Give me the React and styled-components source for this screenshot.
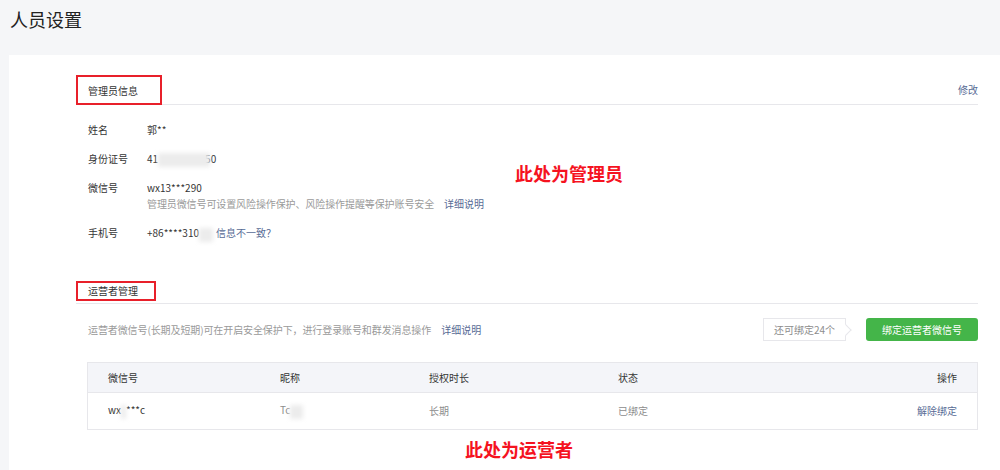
import React from 'react';
import styled, { createGlobalStyle } from 'styled-components';

const GlobalStyle = createGlobalStyle`
  html, body {
    margin: 0;
    padding: 0;
    background: #f5f6f8;
    overflow: hidden;
  }
  body {
    font-family: "Noto Sans CJK SC", "Liberation Sans", sans-serif;
    color: #353535;
    font-size: 10px;
  }
`;

const Header = styled.header`
  height: 55px;
  padding: 6px 10px 0;
  box-sizing: border-box;
  h1 {
    margin: 0;
    font-size: 18px;
    font-weight: normal;
    line-height: 26px;
    color: #222;
  }
`;

const Card = styled.main`
  position: relative;
  margin-left: 9px;
  min-height: 415px;
  background: #fff;
  padding: 20px 22px 0 67px;
  box-sizing: border-box;
`;

const SectionHead = styled.div`
  display: flex;
  justify-content: space-between;
  align-items: flex-start;
  height: ${(p) => p.$rowHeight}px;
  border-bottom: 1px solid #e7e7eb;
  margin-top: ${(p) => p.$top || 0}px;
`;

const HeadTitle = styled.h2`
  margin: 0;
  box-sizing: border-box;
  width: ${(p) => p.$w}px;
  height: ${(p) => p.$h}px;
  border: 2px solid #e8202a;
  padding-left: 10px;
  display: flex;
  align-items: center;
  font-size: 10px;
  font-weight: normal;
  color: #353535;
`;

const EditLink = styled.a`
  align-self: center;
  color: #576b95;
  font-size: 10px;
  text-decoration: none;
  cursor: pointer;
`;

const InfoList = styled.dl`
  margin: 0;
  padding-top: 10px;
`;

const InfoRow = styled.div`
  display: flex;
  padding: 6px 0 6px 12px;
  line-height: 17px;
  dt {
    width: 59px;
    flex: none;
  }
  dd {
    margin: 0;
  }
`;

const Hint = styled.p`
  margin: 0;
  line-height: 16px;
  color: #9a9a9a;
  letter-spacing: -0.1px;
`;

const Link = styled.a`
  color: #576b95;
  text-decoration: none;
  letter-spacing: 0;
  margin-left: ${(p) => p.$gap ?? 10}px;
  cursor: pointer;
`;

const Masked = styled.span`
  display: inline-block;
  vertical-align: middle;
  width: ${(p) => p.$w}px;
  height: 14px;
  margin-right: ${(p) => p.$overlap ? -p.$overlap : 0}px;
  position: relative;
  background: #ececec;
  filter: blur(2px);
`;

const ToolRow = styled.div`
  display: flex;
  align-items: center;
  justify-content: space-between;
  height: 23px;
  margin-top: 14px;
  padding-left: 12px;
  color: #9a9a9a;
  letter-spacing: -0.1px;
`;

const Actions = styled.div`
  display: flex;
  align-items: center;
  gap: 20px;
  letter-spacing: 0;
`;

const Counter = styled.span`
  position: relative;
  height: 23px;
  box-sizing: border-box;
  padding: 0 10px;
  border: 1px solid #e7e7eb;
  display: flex;
  align-items: center;
  color: #8d8d8d;
  background: #fff;
  &::after {
    content: '';
    position: absolute;
    right: -5px;
    top: 7px;
    width: 7px;
    height: 7px;
    background: #fff;
    border-top: 1px solid #e7e7eb;
    border-right: 1px solid #e7e7eb;
    transform: rotate(45deg);
  }
`;

const GreenButton = styled.button`
  width: 112px;
  height: 23px;
  border: 0;
  border-radius: 3px;
  background: #44b549;
  color: #fff;
  font-family: inherit;
  font-size: 10px;
  cursor: pointer;
`;

const Table = styled.div`
  margin: 21px 0 0 11px;
  border: 1px solid #e7e7eb;
`;

const TableRow = styled.div`
  display: grid;
  grid-template-columns: 172px 149px 189px 1fr auto;
  align-items: center;
  padding: 0 20px;
  height: ${(p) => (p.$head ? 29 : 36)}px;
  background: ${(p) => (p.$head ? '#f4f5f9' : '#fff')};
  border-bottom: ${(p) => (p.$head ? '1px solid #e7e7eb' : '0')};
  color: ${(p) => (p.$head ? '#353535' : '#8d8d8d')};
`;

const Cell = styled.span`
  color: ${(p) => p.$color || 'inherit'};
  text-align: ${(p) => (p.$right ? 'right' : 'left')};
`;

const Note = styled.span`
  position: absolute;
  left: ${(p) => p.$x}px;
  top: ${(p) => p.$y}px;
  font-size: 18px;
  line-height: 18px;
  font-weight: bold;
  color: #f5131f;
  white-space: nowrap;
`;

export default function App() {
  return (
    <>
      <GlobalStyle />
      <Header>
        <h1>人员设置</h1>
      </Header>
      <Card>
        <SectionHead $rowHeight={29}>
          <HeadTitle $w={86} $h={30}>管理员信息</HeadTitle>
          <EditLink>修改</EditLink>
        </SectionHead>
        <InfoList>
          <InfoRow>
            <dt>姓名</dt>
            <dd>郭**</dd>
          </InfoRow>
          <InfoRow>
            <dt>身份证号</dt>
            <dd>
              41<Masked $w={52} $overlap={5} />50
            </dd>
          </InfoRow>
          <InfoRow>
            <dt>微信号</dt>
            <dd>
              wx13***290
              <Hint>
                管理员微信号可设置风险操作保护、风险操作提醒等保护账号安全
                <Link>详细说明</Link>
              </Hint>
            </dd>
          </InfoRow>
          <InfoRow>
            <dt>手机号</dt>
            <dd>
              +86****310<Masked $w={14} />
              <Link $gap={3}>信息不一致？</Link>
            </dd>
          </InfoRow>
        </InfoList>

        <SectionHead $rowHeight={22} $top={33}>
          <HeadTitle $w={80} $h={20}>运营者管理</HeadTitle>
        </SectionHead>
        <ToolRow>
          <span>
            运营者微信号(长期及短期)可在开启安全保护下，进行登录账号和群发消息操作
            <Link>详细说明</Link>
          </span>
          <Actions>
            <Counter>还可绑定24个</Counter>
            <GreenButton>绑定运营者微信号</GreenButton>
          </Actions>
        </ToolRow>

        <Table>
          <TableRow $head>
            <Cell>微信号</Cell>
            <Cell>昵称</Cell>
            <Cell>授权时长</Cell>
            <Cell>状态</Cell>
            <Cell $right>操作</Cell>
          </TableRow>
          <TableRow>
            <Cell $color="#353535">
              wx<Masked $w={5} />***c
            </Cell>
            <Cell>
              Tc<Masked $w={13} />
            </Cell>
            <Cell>长期</Cell>
            <Cell>已绑定</Cell>
            <Cell $right $color="#576b95">解除绑定</Cell>
          </TableRow>
        </Table>

        <Note $x={506} $y={109}>此处为管理员</Note>
        <Note $x={456} $y={385}>此处为运营者</Note>
      </Card>
    </>
  );
}
